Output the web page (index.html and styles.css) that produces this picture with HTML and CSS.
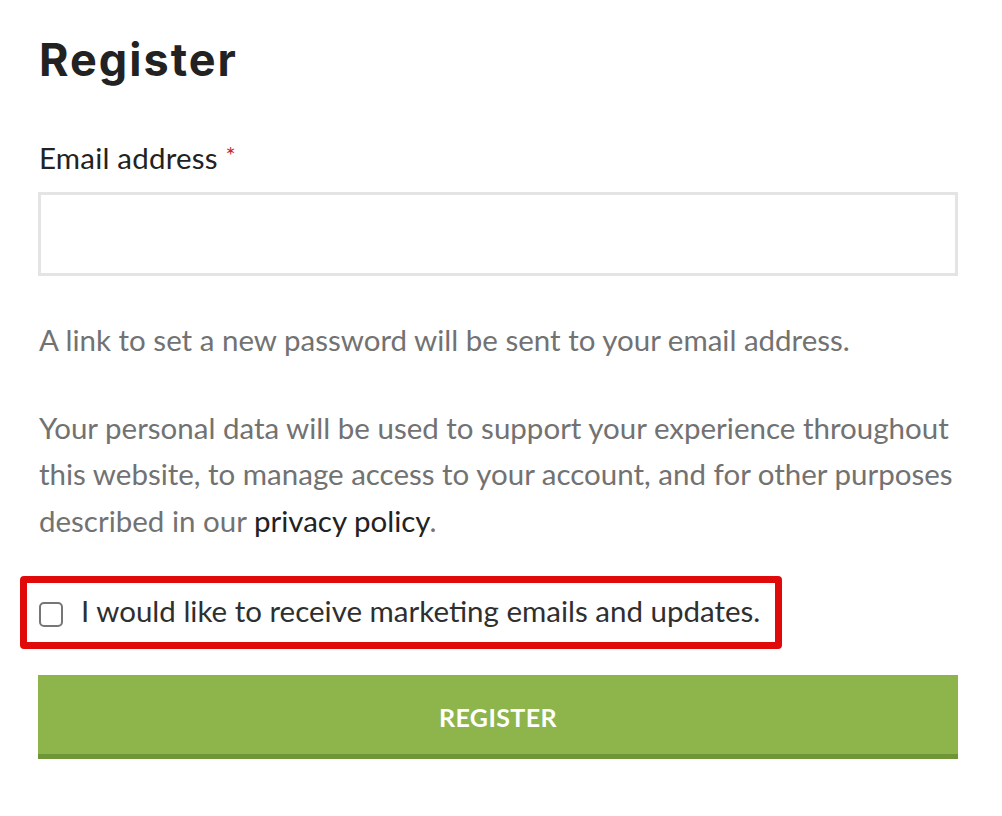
FILE: index.html
```html
<!DOCTYPE html>
<html>
<head>
<meta charset="utf-8">
<link rel="stylesheet" href="styles.css">
</head>
<body>
<main class="page">
  <h2 class="title">Register</h2>
  <form class="form">
    <label class="field-label" for="email">Email address <span class="req">*</span></label>
    <input class="field-input" id="email" type="email">
    <p class="note">A link to set a new password will be sent to your email address.</p>
    <p class="note">Your personal data will be used to support your experience throughout this website, to manage access to your account, and for other purposes described in our <a class="link" href="#">privacy policy</a>.</p>
    <div class="highlight">
      <label class="check">
        <input class="check-box" type="checkbox">
        <span class="check-text">I would like to receive marketing emails and updates.</span>
      </label>
    </div>
    <button class="btn" type="button">REGISTER</button>
  </form>
</main>
</body>
</html>
```
FILE: styles.css
```css
html, body {
  margin: 0;
  padding: 0;
  background: #fff;
}
.page {
  padding: 0 44px 0 38px;
  font-family: "Lato", "Liberation Sans", sans-serif;
}
.title {
  margin: 0;
  padding-top: 32px;
  padding-left: 1px;
  font-family: "Inter", "Noto Sans", sans-serif;
  font-weight: 700;
  font-size: 45px;
  line-height: 56px;
  color: #222;
  letter-spacing: 2px;
}
.form {
  display: flex;
  flex-direction: column;
  margin-top: 52px;
}
.field-label {
  font-size: 29.5px;
  line-height: 36px;
  color: #222;
  padding-left: 1px;
  letter-spacing: 0.2px;
}
.req {
  color: #d0262e;
  font-size: 24px;
  vertical-align: top;
  position: relative;
  top: -3px;
}
.field-input {
  margin-top: 16px;
  height: 84px;
  box-sizing: border-box;
  border: 3px solid #e4e4e4;
  background: #fff;
  outline: none;
}
.note {
  margin: 41px 0 0 0;
  font-size: 29.5px;
  line-height: 46.6px;
  color: #727272;
  padding-left: 1px;
}
.link {
  color: #222;
  text-decoration: none;
}
.highlight {
  margin: 32px 0 0 -18px;
  width: 762px;
  box-sizing: border-box;
  border: 7px solid #e00a0a;
  border-radius: 4px;
  padding: 10px 0 13px 12px;
}
.check {
  display: flex;
  align-items: flex-start;
  gap: 18px;
  font-size: 29.5px;
  line-height: 36px;
  color: #2f2f2f;
}
.check-box {
  appearance: none;
  margin: 9px 0 0 0;
  width: 24px;
  height: 25px;
  border: 2px solid #767676;
  border-radius: 5px;
  background: #fff;
  box-sizing: border-box;
  flex: none;
}
.btn {
  margin-top: 26px;
  height: 84px;
  border: 0;
  border-bottom: 5px solid #6f9636;
  padding: 4px 0 0 0;
  background: #8db54c;
  color: #fff;
  font-family: "Lato", "Liberation Sans", sans-serif;
  font-weight: 700;
  font-size: 25px;
  letter-spacing: 0.4px;
}
```
